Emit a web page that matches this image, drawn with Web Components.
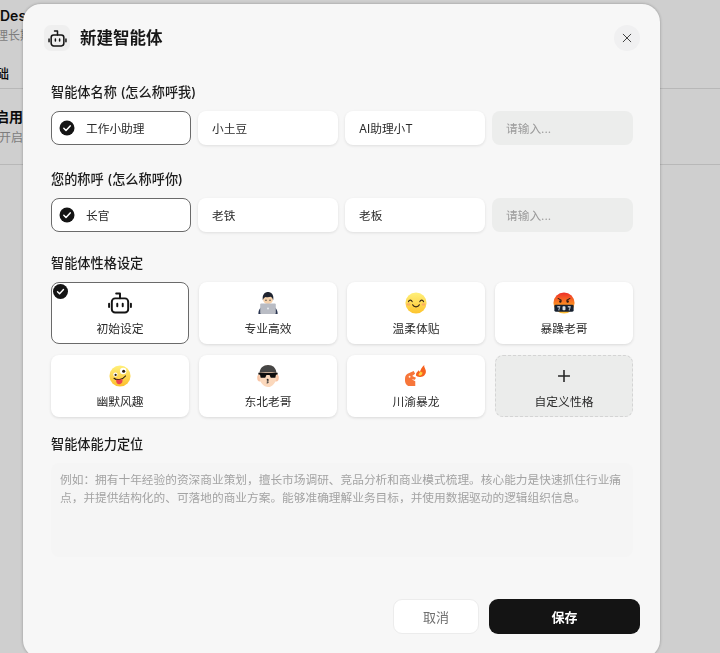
<!DOCTYPE html>
<html lang="zh-CN">
<head>
<meta charset="utf-8">
<style>
  html, body { margin: 0; height: 100%; overflow: hidden; }
  body { font-family: Inter, "Noto Sans CJK SC", sans-serif; background: #cfcfcf; }
</style>
</head>
<body>
<page-behind></page-behind>
<agent-dialog>
  <field-group label="智能体名称 (怎么称呼我)">
    <choice-row>
      <name-choice selected>工作小助理</name-choice>
      <name-choice>小土豆</name-choice>
      <name-choice>AI助理小T</name-choice>
      <name-input></name-input>
    </choice-row>
  </field-group>
  <field-group label="您的称呼 (怎么称呼你)" style="margin-bottom:21px">
    <choice-row>
      <name-choice selected>长官</name-choice>
      <name-choice>老铁</name-choice>
      <name-choice>老板</name-choice>
      <name-input></name-input>
    </choice-row>
  </field-group>
  <field-group label="智能体性格设定" tight>
    <persona-grid>
      <persona-card selected icon="robot">初始设定</persona-card>
      <persona-card icon="laptop">专业高效</persona-card>
      <persona-card icon="smile">温柔体贴</persona-card>
      <persona-card icon="angry">暴躁老哥</persona-card>
      <persona-card icon="zany">幽默风趣</persona-card>
      <persona-card icon="shades">东北老哥</persona-card>
      <persona-card icon="dragon">川渝暴龙</persona-card>
      <persona-card icon="plus" custom>自定义性格</persona-card>
    </persona-grid>
  </field-group>
  <field-group label="智能体能力定位" tight>
    <ability-box>例如：拥有十年经验的资深商业策划，擅长市场调研、竞品分析和商业模式梳理。核心能力是快速抓住行业痛点，并提供结构化的、可落地的商业方案。能够准确理解业务目标，并使用数据驱动的逻辑组织信息。</ability-box>
  </field-group>
</agent-dialog>

<script>
const robot = (w, h) => `<svg width="${w}" height="${h}" viewBox="1 2.200 22 20.100" fill="none" stroke="#141414" stroke-width="1.800" stroke-linecap="round" stroke-linejoin="round" style="overflow:visible">
  <path d="M12 8V3.500H8.500"/><rect x="4.500" y="8" width="15" height="13" rx="3"/>
  <path d="M2 13v3M22 13v3"/><path d="M9.500 13v2.300M14.500 13v2.300"/></svg>`;

const ICONS = {
  robot: robot(24, 22),
  plus: `<svg viewBox="0 0 24 24" fill="none" stroke="#262626" stroke-width="1.700"><path d="M12 5.500v13M5.500 12h13"/></svg>`,
  laptop: `<svg viewBox="0 0 24 24">
    <path d="M1.500 24c0-6 3-9 10.500-9s10.500 3 10.500 9z" fill="#2b3550"/>
    <path d="M9 13h6v4H9z" fill="#f6d2ac"/>
    <circle cx="12" cy="8" r="5.400" fill="#f6d2ac"/>
    <path d="M6.400 9C5.300 3 8.500 0 12 0s6.800 3 5.600 9c-.4-2-1.500-3.300-2.600-3.700-1.700.6-4.300.7-5.700.2-1.300.6-2.400 1.700-2.900 3.500z" fill="#1f2430"/>
    <circle cx="9.800" cy="9" r=".7" fill="#333"/><circle cx="14.200" cy="9" r=".7" fill="#333"/>
    <rect x="3.500" y="12.500" width="17" height="11.500" rx="1" fill="#b9bcc4"/>
    <circle cx="12" cy="18" r="1" fill="#eceef2"/></svg>`,
  smile: `<svg viewBox="0 0 24 24"><defs><linearGradient id="y" x1="0" y1="0" x2="0" y2="1"><stop offset="0" stop-color="#fff07a"/><stop offset="1" stop-color="#fdc42e"/></linearGradient></defs>
    <circle cx="12" cy="12" r="11.500" fill="url(#y)"/>
    <ellipse cx="3.800" cy="13.500" rx="2.200" ry="1.300" fill="#fb9d6d" opacity=".7"/><ellipse cx="20.200" cy="13.500" rx="2.200" ry="1.300" fill="#fb9d6d" opacity=".7"/>
    <g fill="none" stroke="#3a2a16" stroke-width="1.300" stroke-linecap="round"><path d="M3.800 10.500c.8-2.300 3.200-2.300 4 0M16.200 10.500c.8-2.300 3.200-2.300 4 0M8.300 14c1.500 3 5.900 3 7.400 0"/></g></svg>`,
  angry: `<svg viewBox="0 0 24 24"><defs><linearGradient id="r" x1="0" y1="0" x2="0" y2="1"><stop offset="0" stop-color="#ee2d2a"/><stop offset=".5" stop-color="#fa8222"/><stop offset="1" stop-color="#fdc23a"/></linearGradient></defs>
    <circle cx="12" cy="12" r="11.500" fill="url(#r)"/>
    <path d="M5.500 7l3.500 2M18.500 7l-3.500 2" stroke="#2e1a10" stroke-width="1.100" stroke-linecap="round"/>
    <circle cx="8" cy="10.300" r="1.300" fill="#2e1a10"/><circle cx="16" cy="10.300" r="1.300" fill="#2e1a10"/>
    <rect x="1.500" y="13.800" width="21" height="7.700" rx="1.500" fill="#16202f"/>
    <g fill="#d9e0e8"><rect x="4.700" y="15.500" width="3.200" height="1.300"/><rect x="6.200" y="16.800" width="1.400" height="1.400"/><rect x="5.800" y="18.800" width="1.300" height="1.200"/><rect x="10.400" y="15.500" width="3.200" height="4.500" rx=".8"/><rect x="16.100" y="15.500" width="3.200" height="1.300"/><rect x="17.600" y="16.800" width="1.400" height="1.400"/><rect x="17.200" y="18.800" width="1.300" height="1.200"/></g></svg>`,
  zany: `<svg viewBox="0 0 24 24"><defs><linearGradient id="z" x1="0" y1="0" x2="0" y2="1"><stop offset="0" stop-color="#fff07a"/><stop offset="1" stop-color="#fcbf2c"/></linearGradient></defs>
    <circle cx="12" cy="12" r="11.500" fill="url(#z)"/>
    <circle cx="7" cy="10.500" r="2.300" fill="#fff"/><circle cx="7.200" cy="10.800" r="1.200" fill="#2b1d10"/>
    <circle cx="15.500" cy="6.500" r="3.500" fill="#fff"/><circle cx="16" cy="6.800" r="1.700" fill="#2b1d10"/>
    <path d="M5.500 14.500c3 2.500 9 2 12.500-2.500" fill="none" stroke="#2b1d10" stroke-width="1.300" stroke-linecap="round"/>
    <path d="M7.800 15.800c2.200.7 4.400.5 6.600-.7 1 2.900-.2 5.700-3 5.900-2.600.1-4-2.200-3.600-5.200z" fill="#ea4550"/></svg>`,
  shades: `<svg viewBox="0 0 24 24">
    <ellipse cx="3" cy="14" rx="2.800" ry="4" fill="#f9c6a6"/><ellipse cx="21" cy="14" rx="2.800" ry="4" fill="#f9c6a6"/>
    <path d="M2.500 11.500C2.500 4.500 7 0 12 0s9.500 4.500 9.500 11.500c0 8-5 12.500-9.500 12.500S2.500 19.500 2.500 11.500z" fill="#fbd8bc"/>
    <path d="M2.800 8.500C3.300 3 7 0 12 0s8.700 3 9.200 8.500c-3-1-15.400-1-18.400 0z" fill="#464646"/>
    <path d="M1.500 8.500h21v1.800l-1.800.4-.7 3.300h-5l-1.300-3h-3.400l-1.300 3H4l-.7-3.300-1.800-.4z" fill="#0d0d0d"/>
    <path d="M11 15.700c1.600-.2 1.800 1.300-.2 1.800 2 .4 1.800 2 .1 2.100" fill="none" stroke="#2a2a2a" stroke-width="1.100" stroke-linecap="round"/></svg>`,
  dragon: `<svg viewBox="0 0 24 24">
    <path d="M0 15c0-3 1.600-5 4-6l5.500-2.500 1.500 3-3.200 2.400 4.200 2-1.200 2.300-3.600-.7 4 2.300V23H4.500C2 23 0 20 0 17z" fill="#f7763a"/>
    <circle cx="5" cy="12.800" r="1" fill="#fdf0e4"/>
    <path d="M12 11.500c-.4-3 1.500-4 3-5.800.3 1 .8 1.500 1.300 1.600.7-2 1.800-4.800 4.700-7.300-.4 2.300.9 3.400 1.600 5.600.8 3.100-1 6.400-4.500 7.200-2.800.6-5.300.1-6.100-1.300z" fill="#f6621f"/>
    <path d="M14.800 10.600c.2-1.600 1.600-2.300 2.500-3.700.3 1.100 1 1.400 1.700 1.100.2 1.600-.5 3.200-2 3.500-1.100.2-2-.1-2.200-.9z" fill="#fdd03b"/></svg>`
};

class PageBehind extends HTMLElement {
  connectedCallback() {
    this.attachShadow({ mode: 'open' });
    this.shadowRoot.innerHTML = `
      <style>
        :host { display: block; color: #0b0b0b; white-space: nowrap; overflow: hidden; }
        .top { height: 89px; border-bottom: 1px solid #b8b8b8; box-sizing: border-box; }
        .row { height: 75px; border-bottom: 1px solid #b8b8b8; }
        .t { font-size: 14px; font-weight: 600; line-height: 20px; }
        .s { font-size: 12px; color: #7d7d7d; line-height: 18px; }
      </style>
      <div class="top">
        <div class="t" style="padding-top:6px">Des</div>
        <div class="s" style="margin-top:1px;margin-left:-4px">理长期</div>
        <div class="t" style="margin-top:18px;font-weight:500;font-size:13px;margin-left:-4px">础</div>
      </div>
      <div class="row">
        <div class="t" style="padding-top:18px;margin-left:-5px">启用</div>
        <div class="s" style="margin-top:2px;margin-left:-1px">开启后</div>
      </div>`;
  }
}

class AgentDialog extends HTMLElement {
  connectedCallback() {
    this.attachShadow({ mode: 'open' });
    this.shadowRoot.innerHTML = `
      <style>
        :host { display: flex; flex-direction: column; box-sizing: border-box; position: fixed; left: 23px; top: 4px; width: 637px; height: 654px; background: #f7f7f7; border-radius: 18px; box-shadow: 0 0 3px rgba(0,0,0,.3); padding: 0 27px 0 28px; }
        header { display: flex; align-items: flex-start; height: 78px; padding-top: 21px; margin-left: -7px; margin-right: -7px; flex: none; box-sizing: border-box; }
        .logo { width: 26px; height: 26px; background: #efefef; border-radius: 7px; display: grid; place-items: center; }
        h1 { margin: 0 0 0 10px; font-size: 16.500px; font-weight: 600; color: #171717; flex: 1; line-height: 26px; }
        .close { width: 26px; height: 26px; border-radius: 50%; background: #f0f0f1; display: grid; place-items: center; }
        .close svg { width: 12px; height: 12px; }
        main { flex: 1; }
        footer { display: flex; gap: 10px; justify-content: flex-end; margin-right: -7px; padding-bottom: 24px; }
        button { height: 35px; border-radius: 9px; font: inherit; font-size: 13px; cursor: pointer; padding: 0; }
        .cancel { width: 86px; background: #fff; border: 1px solid #ececec; color: #6f6f6f; }
        .save { width: 151px; background: #141414; border: 0; color: #fff; font-weight: 600; }
      </style>
      <header>
        <div class="logo">${robot(19, 17)}</div>
        <h1>新建智能体</h1>
        <div class="close"><svg viewBox="0 0 12 12" fill="none" stroke="#444" stroke-width="1" stroke-linecap="round"><path d="M2.200 2.200l7.600 7.600M9.800 2.200l-7.600 7.600"/></svg></div>
      </header>
      <main><slot></slot></main>
      <footer><button class="cancel">取消</button><button class="save">保存</button></footer>`;
  }
}

class FieldGroup extends HTMLElement {
  connectedCallback() {
    this.attachShadow({ mode: 'open' });
    this.shadowRoot.innerHTML = `
      <style>
        :host { display: block; margin-bottom: 24px; }
        :host([tight]) { margin-bottom: 17px; }
        .label { font-size: 13.200px; font-weight: 500; color: #1c1c1c; line-height: 20px; margin-bottom: 9px; }
      </style>
      <div class="label">${this.getAttribute('label')}</div>
      <slot></slot>`;
  }
}

class ChoiceRow extends HTMLElement {
  connectedCallback() {
    this.attachShadow({ mode: 'open' });
    this.shadowRoot.innerHTML = `
      <style>:host { display: grid; grid-template-columns: 140px 140px 140px 141px; gap: 7px; }</style>
      <slot></slot>`;
  }
}

class NameChoice extends HTMLElement {
  connectedCallback() {
    this.attachShadow({ mode: 'open' });
    const on = this.hasAttribute('selected');
    this.shadowRoot.innerHTML = `
      <style>
        :host { display: flex; align-items: center; box-sizing: border-box; height: 34px; background: #fff; border-radius: 8px; padding: 0 0 1px 14px; font-size: 11.700px; color: #2b2b2b; box-shadow: 0 1px 3px rgba(0,0,0,.1); }
        :host([selected]) { box-shadow: none; border: 1px solid #6a6a6a; padding-left: 7px; }
        svg { width: 16px; height: 16px; margin-right: 11px; flex: none; }
      </style>
      ${on ? '<svg viewBox="0 0 16 16"><circle cx="8" cy="8" r="7.500" fill="#141414"/><path d="M4.800 8.300l2.200 2.200 4.200-4.600" fill="none" stroke="#fff" stroke-width="1.500" stroke-linecap="round" stroke-linejoin="round"/></svg>' : ''}
      <slot></slot>`;
  }
}

class NameInput extends HTMLElement {
  connectedCallback() {
    this.attachShadow({ mode: 'open' });
    this.shadowRoot.innerHTML = `
      <style>
        :host { display: flex; align-items: center; box-sizing: border-box; height: 34px; background: #ecedec; border-radius: 8px; padding: 0 0 1px 14px; font-size: 11.700px; color: #9c9c9c; }
      </style>
      <span>请输入...</span>`;
  }
}

class PersonaGrid extends HTMLElement {
  connectedCallback() {
    this.attachShadow({ mode: 'open' });
    this.shadowRoot.innerHTML = `
      <style>:host { display: grid; grid-template-columns: repeat(4, 138px); grid-auto-rows: 62px; column-gap: 10px; row-gap: 11px; }</style>
      <slot></slot>`;
  }
}

class PersonaCard extends HTMLElement {
  connectedCallback() {
    this.attachShadow({ mode: 'open' });
    this.shadowRoot.innerHTML = `
      <style>
        :host { display: flex; flex-direction: column; align-items: center; box-sizing: border-box; position: relative; background: #fff; border-radius: 8px; font-size: 11.800px; color: #2b2b2b; padding-top: 10px; box-shadow: 0 1px 3px rgba(0,0,0,.12); }
        :host([selected]) { box-shadow: none; border: 1px solid #6a6a6a; padding-top: 9px; }
        :host([custom]) { background: #ebeceb; box-shadow: none; border: 1px dashed #d4d4d4; padding-top: 9px; }
        .icon { width: 22px; height: 22px; display: flex; justify-content: center; }
        .icon svg { display: block; flex: none; }
        .icon svg:not([width]) { width: 100%; height: 100%; }
        .label { margin-top: 7px; line-height: 17px; }
        .check { position: absolute; left: 1px; top: 1px; width: 15px; height: 15px; }
      </style>
      ${this.hasAttribute('selected') ? '<svg class="check" viewBox="0 0 16 16"><circle cx="8" cy="8" r="8" fill="#141414"/><path d="M4.800 8.300l2.200 2.200 4.200-4.600" fill="none" stroke="#fff" stroke-width="1.500" stroke-linecap="round" stroke-linejoin="round"/></svg>' : ''}
      <div class="icon">${ICONS[this.getAttribute('icon')]}</div>
      <div class="label"><slot></slot></div>`;
  }
}

class AbilityBox extends HTMLElement {
  connectedCallback() {
    this.attachShadow({ mode: 'open' });
    this.shadowRoot.innerHTML = `
      <style>
        :host { display: block; box-sizing: border-box; height: 94px; background: #f5f5f5; border-radius: 8px; padding: 8px 9px; font-size: 11.700px; line-height: 18px; color: #a3a3a3; }
      </style>
      <slot></slot>`;
  }
}

customElements.define('page-behind', PageBehind);
customElements.define('agent-dialog', AgentDialog);
customElements.define('field-group', FieldGroup);
customElements.define('choice-row', ChoiceRow);
customElements.define('name-choice', NameChoice);
customElements.define('name-input', NameInput);
customElements.define('persona-grid', PersonaGrid);
customElements.define('persona-card', PersonaCard);
customElements.define('ability-box', AbilityBox);
</script>
</body>
</html>
